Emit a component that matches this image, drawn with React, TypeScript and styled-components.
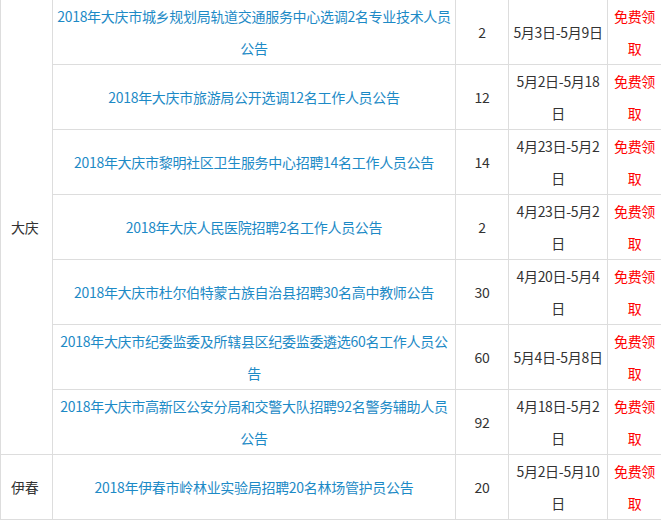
import React from "react";
import styled, { createGlobalStyle } from "styled-components";

const G = createGlobalStyle`
  body { margin: 0; background: #fff; font-family: "Noto Sans CJK SC", "Liberation Sans", sans-serif; }
`;
const Table = styled.table`
  border-collapse: collapse;
  width: 661px;
  table-layout: fixed;
  margin-top: -1px;
  font-size: 14px;
  letter-spacing: -0.3px;
  color: #333;
`;
const Col = styled.col<{ $w: number }>`
  width: ${(p) => p.$w}px;
`;
const Td = styled.td<{ $align?: string }>`
  border: 1px solid #ddd;
  height: 64px;
  padding: 0 3px;
  line-height: 32px;
  text-align: ${(p) => p.$align || "center"};
  vertical-align: middle;
  word-break: break-all;
`;
const Region = styled(Td)`
  padding-left: 10px;
`;
const Link = styled.span`
  color: #1d8ac6;
`;
const Free = styled.span`
  color: #ff0000;
`;
const rows = [
  ["2018年大庆市城乡规划局轨道交通服务中心选调2名专业技术人员公告", "2", "5月3日-5月9日"],
  ["2018年大庆市旅游局公开选调12名工作人员公告", "12", "5月2日-5月18日"],
  ["2018年大庆市黎明社区卫生服务中心招聘14名工作人员公告", "14", "4月23日-5月2日"],
  ["2018年大庆人民医院招聘2名工作人员公告", "2", "4月23日-5月2日"],
  ["2018年大庆市杜尔伯特蒙古族自治县招聘30名高中教师公告", "30", "4月20日-5月4日"],
  ["2018年大庆市纪委监委及所辖县区纪委监委遴选60名工作人员公告", "60", "5月4日-5月8日"],
  ["2018年大庆市高新区公安分局和交警大队招聘92名警务辅助人员公告", "92", "4月18日-5月2日"],
  ["2018年伊春市岭林业实验局招聘20名林场管护员公告", "20", "5月2日-5月10日"],
];
export default function App() {
  return (
    <>
      <G />
      <Table>
        <colgroup>
          <Col $w={52} />
          <Col $w={403} />
          <Col $w={53} />
          <Col $w={99} />
          <Col $w={54} />
        </colgroup>
        <tbody>
          {rows.map((r, i) => (
            <tr key={i}>
              {i === 0 && <Region rowSpan={7} $align="left">大庆</Region>}
              {i === 7 && <Region $align="left">伊春</Region>}
              <Td><Link>{r[0]}</Link></Td>
              <Td>{r[1]}</Td>
              <Td>{r[2]}</Td>
              <Td><Free>免费领取</Free></Td>
            </tr>
          ))}
        </tbody>
      </Table>
    </>
  );
}
